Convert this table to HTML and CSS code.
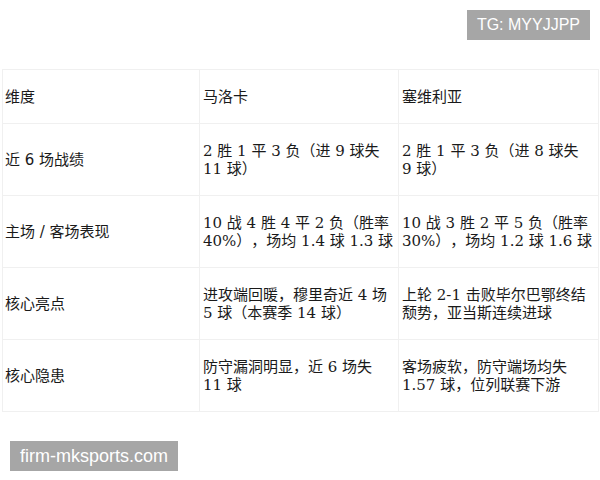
FILE: index.html
```html
<!DOCTYPE html>
<html lang="zh-CN">
<head>
<meta charset="utf-8">
<title>马洛卡 vs 塞维利亚</title>
<link rel="stylesheet" href="styles.css">
</head>
<body>
<div class="page">
  <div class="topbar">
    <span class="tag">TG: MYYJJPP</span>
  </div>
  <table class="compare">
    <colgroup>
      <col class="c1">
      <col class="c2">
      <col class="c3">
    </colgroup>
    <tr class="head">
      <td class="dim">维度</td>
      <td>马洛卡</td>
      <td>塞维利亚</td>
    </tr>
    <tr>
      <td class="dim">近 6 场战绩</td>
      <td>2 胜 1 平 3 负（进 9 球失 11&nbsp;球）</td>
      <td>2 胜 1 平 3 负（进 8 球失 9&nbsp;球）</td>
    </tr>
    <tr>
      <td class="dim">主场 / 客场表现</td>
      <td>10 战 4 胜 4 平 2 负（胜率 40%），场均 1.4 球 1.3 球</td>
      <td>10 战 3 胜 2 平 5 负（胜率 30%），场均 1.2 球 1.6 球</td>
    </tr>
    <tr>
      <td class="dim">核心亮点</td>
      <td>进攻端回暖，穆里奇近 4 场 5 球（本赛季 14 球）</td>
      <td>上轮 2-1 击败毕尔巴鄂终结颓势，亚当斯连续进球</td>
    </tr>
    <tr>
      <td class="dim">核心隐患</td>
      <td>防守漏洞明显，近 6 场失 11&nbsp;球</td>
      <td>客场疲软，防守端场均失 1.57 球，位列联赛下游</td>
    </tr>
  </table>
  <div class="footer">
    <span class="site">firm-mksports.com</span>
  </div>
</div>
</body>
</html>
```
FILE: styles.css
```css
html, body {
  margin: 0;
  padding: 0;
  background: #ffffff;
}

.page {
  width: 600px;
  height: 480px;
  display: flex;
  flex-direction: column;
}

.topbar {
  display: flex;
  justify-content: flex-end;
  padding: 10px 10px 0 0;
}

.tag,
.site {
  display: inline-block;
  background: #a6a6a6;
  color: #ffffff;
  font-family: "Liberation Sans", Arial, sans-serif;
  height: 30px;
  line-height: 30px;
  padding: 0 10px;
}

.tag {
  font-size: 16px;
}

.compare {
  margin: 29px 0 0 2px;
  width: 596px;
  border-collapse: collapse;
  table-layout: fixed;
  font-family: "DejaVu Serif", "Noto Sans CJK SC", serif;
  font-size: 15px;
  line-height: 18px;
  color: #1a1a1a;
  text-spacing-trim: space-all;
}

.c1 { width: 197px; }
.c2 { width: 199px; }
.c3 { width: 200px; }

.compare td {
  border: 1px solid #f0f0f0;
  padding: 0 3px 0 3px;
  vertical-align: middle;
  height: 71px;
}

.compare tr.head td {
  height: 53px;
}

.compare td.dim {
  font-family: "DejaVu Sans", "Noto Sans CJK SC", sans-serif;
  padding-left: 2px;
}

.footer {
  padding: 29px 0 0 10px;
}

.site {
  font-size: 18px;
}
```
